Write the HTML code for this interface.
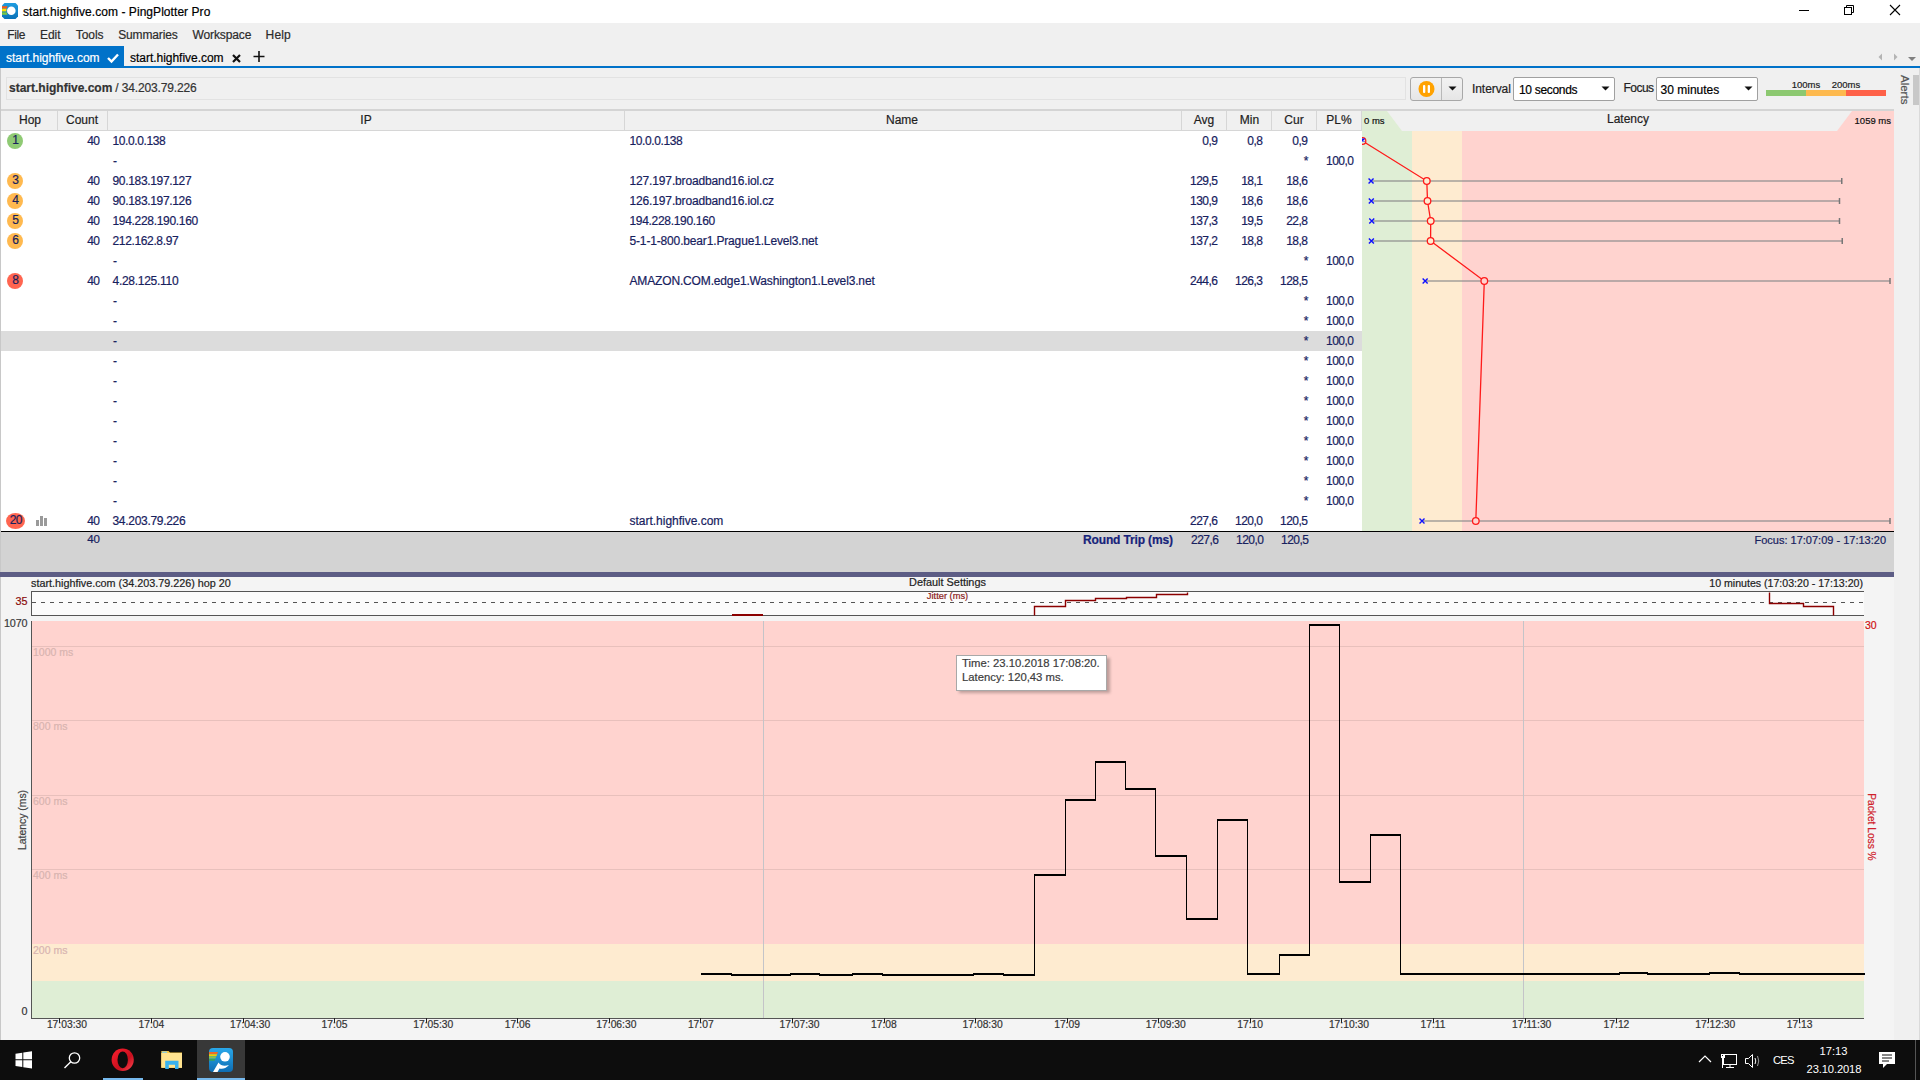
<!DOCTYPE html>
<html><head><meta charset="utf-8"><style>
html,body{margin:0;padding:0;width:1920px;height:1080px;overflow:hidden;background:#f0f0f0;font-family:"Liberation Sans", sans-serif;}
.t{position:absolute;white-space:pre;-webkit-text-stroke:0.2px currentColor;font-family:"Liberation Sans", sans-serif;}
</style></head><body>
<div style="position:absolute;left:0px;top:0px;width:1920px;height:23px;background:#ffffff;"></div>
<svg style="position:absolute;left:2px;top:3px" width="17" height="17" viewBox="0 0 17 17">
<defs><linearGradient id="ig" x1="0" y1="0" x2="0" y2="1"><stop offset="0" stop-color="#1f9de0"/><stop offset="1" stop-color="#0a72b8"/></linearGradient></defs>
<polygon points="2.5,0 13.5,0 16,2.5 16,13.5 13.5,16 2.5,16 0,13.5 0,2.5" fill="url(#ig)"/>
<polygon points="0,3.3 5.5,3.3 4.8,5.6 0,5.6" fill="#ff5a10"/><polygon points="0,5.8 4.5,5.8 4.3,8.6 0,8.6" fill="#ffe000"/>
<polygon points="0,8.8 4.3,8.8 4.6,9.6 0,9.6" fill="#3fa070"/><polygon points="0,9.6 4.6,9.6 5.5,11.8 0,11.8" fill="#7ac943"/>
<circle cx="9.3" cy="7.7" r="4.3" fill="#fff"/></svg>
<div class="t" style="left:23px;top:5.84px;font-size:12px;line-height:12px;color:#000;font-weight:400;letter-spacing:0.055px;">start.highfive.com - PingPlotter Pro</div>
<div style="position:absolute;left:1799px;top:10px;width:10px;height:1px;background:#000;"></div>
<svg style="position:absolute;left:1840px;top:2px" width="20" height="18"><g fill="none" stroke="#000" stroke-width="1">
<rect x="4.5" y="5.5" width="7" height="7"/><path d="M6.5 5.5 V3.5 H13.5 V10.5 H11.5"/></g></svg>
<svg style="position:absolute;left:1886px;top:1px" width="18" height="18"><path d="M4 4 L14 14 M14 4 L4 14" stroke="#000" stroke-width="1.1"/></svg>
<div style="position:absolute;left:0px;top:23px;width:1920px;height:23px;background:#f0f0f0;"></div>
<div class="t" style="left:7.2px;top:28.54px;font-size:12px;line-height:12px;color:#2b2b2b;font-weight:400;letter-spacing:-0.361px;">File</div>
<div class="t" style="left:40.0px;top:28.54px;font-size:12px;line-height:12px;color:#2b2b2b;font-weight:400;letter-spacing:-0.047px;">Edit</div>
<div class="t" style="left:75.7px;top:28.54px;font-size:12px;line-height:12px;color:#2b2b2b;font-weight:400;letter-spacing:-0.043px;">Tools</div>
<div class="t" style="left:118.25px;top:28.54px;font-size:12px;line-height:12px;color:#2b2b2b;font-weight:400;letter-spacing:-0.154px;">Summaries</div>
<div class="t" style="left:192.5px;top:28.54px;font-size:12px;line-height:12px;color:#2b2b2b;font-weight:400;letter-spacing:-0.113px;">Workspace</div>
<div class="t" style="left:265.6px;top:28.54px;font-size:12px;line-height:12px;color:#2b2b2b;font-weight:400;letter-spacing:0.153px;">Help</div>
<div style="position:absolute;left:0px;top:46px;width:1920px;height:20px;background:#f0f0f0;"></div>
<div style="position:absolute;left:0px;top:46px;width:124px;height:20px;background:#0072c9;"></div>
<div style="position:absolute;left:0px;top:66px;width:1920px;height:2px;background:#0072c9;"></div>
<div class="t" style="left:6px;top:51.84px;font-size:12px;line-height:12px;color:#fff;font-weight:400;letter-spacing:-0.030px;">start.highfive.com</div>
<svg style="position:absolute;left:106px;top:52px" width="14" height="12"><path d="M2 6 L5.5 9.5 L12 2.5" fill="none" stroke="#fff" stroke-width="2.4"/></svg>
<div class="t" style="left:130px;top:51.84px;font-size:12px;line-height:12px;color:#000;font-weight:400;letter-spacing:-0.025px;">start.highfive.com</div>
<svg style="position:absolute;left:231px;top:53px" width="11" height="11"><path d="M2 2 L9 9 M9 2 L2 9" stroke="#111" stroke-width="2.2"/></svg>
<svg style="position:absolute;left:253px;top:50px" width="12" height="13"><path d="M6 1 V12 M0.5 6.5 H11.5" stroke="#111" stroke-width="1.6"/></svg>
<svg style="position:absolute;left:1876px;top:52px" width="44" height="11">
<path d="M6 1.5 L2.5 5 L6 8.5 Z" fill="#b4b4b4"/><path d="M18 1.5 L21.5 5 L18 8.5 Z" fill="#b4b4b4"/>
<path d="M32 5 L40 5 L36 9 Z" fill="#808080"/></svg>
<div style="position:absolute;left:0px;top:68px;width:1920px;height:972px;background:#f0f0f0;"></div>
<div style="position:absolute;left:0px;top:68px;width:1px;height:972px;background:#c8c8c8;"></div>
<div style="position:absolute;left:6px;top:77px;width:1400px;height:23px;background:#f0f0f0;box-sizing:border-box;border:1px solid #e2e2e2;"></div>
<div class="t" style="left:9px;top:82.34px;font-size:12px;line-height:12px;color:#333;font-weight:700;letter-spacing:-0.003px;">start.highfive.com</div>
<div class="t" style="left:115.3px;top:82.34px;font-size:12px;line-height:12px;color:#333;font-weight:400;letter-spacing:-0.141px;">/ 34.203.79.226</div>
<div style="position:absolute;left:1410px;top:77px;width:53px;height:24px;box-sizing:border-box;border:1px solid #a8a8a8;border-radius:3px;background:linear-gradient(#f2f2f2,#e6e6e6)"></div>
<div style="position:absolute;left:1441px;top:78px;width:1px;height:22px;background:#b8b8b8;"></div>
<svg style="position:absolute;left:1416px;top:79px" width="21" height="20"><circle cx="10.5" cy="10" r="8" fill="#ffa200"/>
<rect x="7" y="6" width="2.3" height="8" rx="1" fill="#fff"/><rect x="11.7" y="6" width="2.3" height="8" rx="1" fill="#fff"/></svg>
<svg style="position:absolute;left:1448px;top:86px" width="10" height="6"><path d="M0.5 0.5 L8.5 0.5 L4.5 4.5 Z" fill="#111"/></svg>
<div class="t" style="left:1472px;top:82.84px;font-size:12px;line-height:12px;color:#222;font-weight:400;letter-spacing:-0.070px;">Interval</div>
<div style="position:absolute;left:1513px;top:77px;width:102px;height:24px;box-sizing:border-box;border:1px solid #a0a0a0;border-radius:2px;background:#fff"></div>
<div class="t" style="left:1519px;top:83.64px;font-size:12px;line-height:12px;color:#000;font-weight:400;letter-spacing:-0.309px;">10 seconds</div>
<svg style="position:absolute;left:1601px;top:86px" width="10" height="6"><path d="M0.5 0.5 L8.5 0.5 L4.5 4.5 Z" fill="#111"/></svg>
<div class="t" style="left:1623.5px;top:82.44px;font-size:12px;line-height:12px;color:#222;font-weight:400;letter-spacing:-0.537px;">Focus</div>
<div style="position:absolute;left:1656px;top:77px;width:102px;height:24px;box-sizing:border-box;border:1px solid #a0a0a0;border-radius:2px;background:#fff"></div>
<div class="t" style="left:1660.5px;top:83.64px;font-size:12px;line-height:12px;color:#000;font-weight:400;letter-spacing:0.010px;">30 minutes</div>
<svg style="position:absolute;left:1744px;top:86px" width="10" height="6"><path d="M0.5 0.5 L8.5 0.5 L4.5 4.5 Z" fill="#111"/></svg>
<div style="position:absolute;left:1766px;top:90px;width:40px;height:6px;background:#8cc870;"></div>
<div style="position:absolute;left:1806px;top:90px;width:40px;height:6px;background:#fdb94e;"></div>
<div style="position:absolute;left:1846px;top:90px;width:40px;height:6px;background:#fe6148;"></div>
<div class="t" style="left:1306px;width:1000px;text-align:center;top:79.96px;font-size:9.5px;line-height:9.5px;color:#222;font-weight:400;">100ms</div>
<div class="t" style="left:1346px;width:1000px;text-align:center;top:79.96px;font-size:9.5px;line-height:9.5px;color:#222;font-weight:400;">200ms</div>
<div style="position:absolute;left:1894px;top:68px;width:26px;height:972px;background:#f0f0f0;"></div>
<div style="position:absolute;left:1919px;top:68px;width:1px;height:972px;background:#dadada;"></div>
<div style="position:absolute;left:1913px;top:75px;width:6px;height:30px;background:#c8c8c8;"></div>
<div class="t" style="left:1893px;top:80px;width:24px;height:14px;font-size:11.5px;line-height:14px;color:#555;transform:rotate(90deg);transform-origin:center;text-align:center;white-space:nowrap">Alerts</div>
<div style="position:absolute;left:1px;top:109px;width:1893px;height:2px;background:#d4d4d4;"></div>
<div style="position:absolute;left:1px;top:111px;width:1361px;height:19px;background:#f0f0f0;"></div>
<div style="position:absolute;left:1px;top:130px;width:1361px;height:1px;background:#d6d6d6;"></div>
<div style="position:absolute;left:57px;top:111px;width:1px;height:19px;background:#d6d6d6;"></div>
<div style="position:absolute;left:107px;top:111px;width:1px;height:19px;background:#d6d6d6;"></div>
<div style="position:absolute;left:624px;top:111px;width:1px;height:19px;background:#d6d6d6;"></div>
<div style="position:absolute;left:1181px;top:111px;width:1px;height:19px;background:#d6d6d6;"></div>
<div style="position:absolute;left:1226px;top:111px;width:1px;height:19px;background:#d6d6d6;"></div>
<div style="position:absolute;left:1271px;top:111px;width:1px;height:19px;background:#d6d6d6;"></div>
<div style="position:absolute;left:1316px;top:111px;width:1px;height:19px;background:#d6d6d6;"></div>
<div style="position:absolute;left:1361px;top:111px;width:1px;height:19px;background:#d6d6d6;"></div>
<div class="t" style="left:-470px;width:1000px;text-align:center;top:113.84px;font-size:12px;line-height:12px;color:#1e1e1e;font-weight:400;">Hop</div>
<div class="t" style="left:-418px;width:1000px;text-align:center;top:113.84px;font-size:12px;line-height:12px;color:#1e1e1e;font-weight:400;">Count</div>
<div class="t" style="left:-134px;width:1000px;text-align:center;top:113.84px;font-size:12px;line-height:12px;color:#1e1e1e;font-weight:400;">IP</div>
<div class="t" style="left:402px;width:1000px;text-align:center;top:113.84px;font-size:12px;line-height:12px;color:#1e1e1e;font-weight:400;">Name</div>
<div class="t" style="left:704px;width:1000px;text-align:center;top:113.84px;font-size:12px;line-height:12px;color:#1e1e1e;font-weight:400;">Avg</div>
<div class="t" style="left:749.5px;width:1000px;text-align:center;top:113.84px;font-size:12px;line-height:12px;color:#1e1e1e;font-weight:400;">Min</div>
<div class="t" style="left:794px;width:1000px;text-align:center;top:113.84px;font-size:12px;line-height:12px;color:#1e1e1e;font-weight:400;">Cur</div>
<div class="t" style="left:839px;width:1000px;text-align:center;top:113.84px;font-size:12px;line-height:12px;color:#1e1e1e;font-weight:400;">PL%</div>
<div style="position:absolute;left:1px;top:131px;width:1361px;height:400px;background:#ffffff;"></div>
<div style="position:absolute;left:1px;top:331px;width:1361px;height:20px;background:#dcdcdc;"></div>
<div style="position:absolute;left:7.0px;top:133px;width:16px;height:16px;border-radius:50%;background:#8fca74"></div>
<div class="t" style="left:-484.5px;width:1000px;text-align:center;top:133.84px;font-size:12px;line-height:12px;color:#17215e;font-weight:400;">1</div>
<div class="t" style="left:-900.500px;width:1000px;text-align:right;top:134.84px;font-size:12px;line-height:12px;color:#17215e;font-weight:400;letter-spacing:-0.500px;">40</div>
<div class="t" style="left:112.5px;top:134.84px;font-size:12px;line-height:12px;color:#17215e;font-weight:400;letter-spacing:-0.402px;">10.0.0.138</div>
<div class="t" style="left:629.5px;top:134.84px;font-size:12px;line-height:12px;color:#17215e;font-weight:400;letter-spacing:-0.402px;">10.0.0.138</div>
<div class="t" style="left:217.500px;width:1000px;text-align:right;top:134.84px;font-size:12px;line-height:12px;color:#17215e;font-weight:400;letter-spacing:-0.500px;">0,9</div>
<div class="t" style="left:262.500px;width:1000px;text-align:right;top:134.84px;font-size:12px;line-height:12px;color:#17215e;font-weight:400;letter-spacing:-0.500px;">0,8</div>
<div class="t" style="left:307.500px;width:1000px;text-align:right;top:134.84px;font-size:12px;line-height:12px;color:#17215e;font-weight:400;letter-spacing:-0.500px;">0,9</div>
<div class="t" style="left:113px;top:154.54px;font-size:12px;line-height:12px;color:#17215e;font-weight:400;">-</div>
<div class="t" style="left:308.5px;width:1000px;text-align:right;top:154.84px;font-size:12px;line-height:12px;color:#17215e;font-weight:400;">*</div>
<div class="t" style="left:353.500px;width:1000px;text-align:right;top:154.84px;font-size:12px;line-height:12px;color:#17215e;font-weight:400;letter-spacing:-0.500px;">100,0</div>
<div style="position:absolute;left:7.0px;top:173px;width:16px;height:16px;border-radius:50%;background:#ffb94f"></div>
<div class="t" style="left:-484.5px;width:1000px;text-align:center;top:173.84px;font-size:12px;line-height:12px;color:#17215e;font-weight:400;">3</div>
<div class="t" style="left:-900.500px;width:1000px;text-align:right;top:174.84px;font-size:12px;line-height:12px;color:#17215e;font-weight:400;letter-spacing:-0.500px;">40</div>
<div class="t" style="left:112.5px;top:174.84px;font-size:12px;line-height:12px;color:#17215e;font-weight:400;letter-spacing:-0.330px;">90.183.197.127</div>
<div class="t" style="left:629.5px;top:174.84px;font-size:12px;line-height:12px;color:#17215e;font-weight:400;letter-spacing:-0.143px;">127.197.broadband16.iol.cz</div>
<div class="t" style="left:217.500px;width:1000px;text-align:right;top:174.84px;font-size:12px;line-height:12px;color:#17215e;font-weight:400;letter-spacing:-0.500px;">129,5</div>
<div class="t" style="left:262.500px;width:1000px;text-align:right;top:174.84px;font-size:12px;line-height:12px;color:#17215e;font-weight:400;letter-spacing:-0.500px;">18,1</div>
<div class="t" style="left:307.500px;width:1000px;text-align:right;top:174.84px;font-size:12px;line-height:12px;color:#17215e;font-weight:400;letter-spacing:-0.500px;">18,6</div>
<div style="position:absolute;left:7.0px;top:193px;width:16px;height:16px;border-radius:50%;background:#ffb94f"></div>
<div class="t" style="left:-484.5px;width:1000px;text-align:center;top:193.84px;font-size:12px;line-height:12px;color:#17215e;font-weight:400;">4</div>
<div class="t" style="left:-900.500px;width:1000px;text-align:right;top:194.84px;font-size:12px;line-height:12px;color:#17215e;font-weight:400;letter-spacing:-0.500px;">40</div>
<div class="t" style="left:112.5px;top:194.84px;font-size:12px;line-height:12px;color:#17215e;font-weight:400;letter-spacing:-0.330px;">90.183.197.126</div>
<div class="t" style="left:629.5px;top:194.84px;font-size:12px;line-height:12px;color:#17215e;font-weight:400;letter-spacing:-0.143px;">126.197.broadband16.iol.cz</div>
<div class="t" style="left:217.500px;width:1000px;text-align:right;top:194.84px;font-size:12px;line-height:12px;color:#17215e;font-weight:400;letter-spacing:-0.500px;">130,9</div>
<div class="t" style="left:262.500px;width:1000px;text-align:right;top:194.84px;font-size:12px;line-height:12px;color:#17215e;font-weight:400;letter-spacing:-0.500px;">18,6</div>
<div class="t" style="left:307.500px;width:1000px;text-align:right;top:194.84px;font-size:12px;line-height:12px;color:#17215e;font-weight:400;letter-spacing:-0.500px;">18,6</div>
<div style="position:absolute;left:7.0px;top:213px;width:16px;height:16px;border-radius:50%;background:#ffb94f"></div>
<div class="t" style="left:-484.5px;width:1000px;text-align:center;top:213.84px;font-size:12px;line-height:12px;color:#17215e;font-weight:400;">5</div>
<div class="t" style="left:-900.500px;width:1000px;text-align:right;top:214.84px;font-size:12px;line-height:12px;color:#17215e;font-weight:400;letter-spacing:-0.500px;">40</div>
<div class="t" style="left:112.5px;top:214.84px;font-size:12px;line-height:12px;color:#17215e;font-weight:400;letter-spacing:-0.313px;">194.228.190.160</div>
<div class="t" style="left:629.5px;top:214.84px;font-size:12px;line-height:12px;color:#17215e;font-weight:400;letter-spacing:-0.313px;">194.228.190.160</div>
<div class="t" style="left:217.500px;width:1000px;text-align:right;top:214.84px;font-size:12px;line-height:12px;color:#17215e;font-weight:400;letter-spacing:-0.500px;">137,3</div>
<div class="t" style="left:262.500px;width:1000px;text-align:right;top:214.84px;font-size:12px;line-height:12px;color:#17215e;font-weight:400;letter-spacing:-0.500px;">19,5</div>
<div class="t" style="left:307.500px;width:1000px;text-align:right;top:214.84px;font-size:12px;line-height:12px;color:#17215e;font-weight:400;letter-spacing:-0.500px;">22,8</div>
<div style="position:absolute;left:7.0px;top:233px;width:16px;height:16px;border-radius:50%;background:#ffb94f"></div>
<div class="t" style="left:-484.5px;width:1000px;text-align:center;top:233.84px;font-size:12px;line-height:12px;color:#17215e;font-weight:400;">6</div>
<div class="t" style="left:-900.500px;width:1000px;text-align:right;top:234.84px;font-size:12px;line-height:12px;color:#17215e;font-weight:400;letter-spacing:-0.500px;">40</div>
<div class="t" style="left:112.5px;top:234.84px;font-size:12px;line-height:12px;color:#17215e;font-weight:400;letter-spacing:-0.357px;">212.162.8.97</div>
<div class="t" style="left:629.5px;top:234.84px;font-size:12px;line-height:12px;color:#17215e;font-weight:400;letter-spacing:-0.155px;">5-1-1-800.bear1.Prague1.Level3.net</div>
<div class="t" style="left:217.500px;width:1000px;text-align:right;top:234.84px;font-size:12px;line-height:12px;color:#17215e;font-weight:400;letter-spacing:-0.500px;">137,2</div>
<div class="t" style="left:262.500px;width:1000px;text-align:right;top:234.84px;font-size:12px;line-height:12px;color:#17215e;font-weight:400;letter-spacing:-0.500px;">18,8</div>
<div class="t" style="left:307.500px;width:1000px;text-align:right;top:234.84px;font-size:12px;line-height:12px;color:#17215e;font-weight:400;letter-spacing:-0.500px;">18,8</div>
<div class="t" style="left:113px;top:254.54px;font-size:12px;line-height:12px;color:#17215e;font-weight:400;">-</div>
<div class="t" style="left:308.5px;width:1000px;text-align:right;top:254.84px;font-size:12px;line-height:12px;color:#17215e;font-weight:400;">*</div>
<div class="t" style="left:353.500px;width:1000px;text-align:right;top:254.84px;font-size:12px;line-height:12px;color:#17215e;font-weight:400;letter-spacing:-0.500px;">100,0</div>
<div style="position:absolute;left:7.0px;top:273px;width:16px;height:16px;border-radius:50%;background:#ff6550"></div>
<div class="t" style="left:-484.5px;width:1000px;text-align:center;top:273.84px;font-size:12px;line-height:12px;color:#17215e;font-weight:400;">8</div>
<div class="t" style="left:-900.500px;width:1000px;text-align:right;top:274.84px;font-size:12px;line-height:12px;color:#17215e;font-weight:400;letter-spacing:-0.500px;">40</div>
<div class="t" style="left:112.5px;top:274.84px;font-size:12px;line-height:12px;color:#17215e;font-weight:400;letter-spacing:-0.282px;">4.28.125.110</div>
<div class="t" style="left:629.5px;top:274.84px;font-size:12px;line-height:12px;color:#17215e;font-weight:400;letter-spacing:-0.152px;">AMAZON.COM.edge1.Washington1.Level3.net</div>
<div class="t" style="left:217.500px;width:1000px;text-align:right;top:274.84px;font-size:12px;line-height:12px;color:#17215e;font-weight:400;letter-spacing:-0.500px;">244,6</div>
<div class="t" style="left:262.500px;width:1000px;text-align:right;top:274.84px;font-size:12px;line-height:12px;color:#17215e;font-weight:400;letter-spacing:-0.500px;">126,3</div>
<div class="t" style="left:307.500px;width:1000px;text-align:right;top:274.84px;font-size:12px;line-height:12px;color:#17215e;font-weight:400;letter-spacing:-0.500px;">128,5</div>
<div class="t" style="left:113px;top:294.54px;font-size:12px;line-height:12px;color:#17215e;font-weight:400;">-</div>
<div class="t" style="left:308.5px;width:1000px;text-align:right;top:294.84px;font-size:12px;line-height:12px;color:#17215e;font-weight:400;">*</div>
<div class="t" style="left:353.500px;width:1000px;text-align:right;top:294.84px;font-size:12px;line-height:12px;color:#17215e;font-weight:400;letter-spacing:-0.500px;">100,0</div>
<div class="t" style="left:113px;top:314.54px;font-size:12px;line-height:12px;color:#17215e;font-weight:400;">-</div>
<div class="t" style="left:308.5px;width:1000px;text-align:right;top:314.84px;font-size:12px;line-height:12px;color:#17215e;font-weight:400;">*</div>
<div class="t" style="left:353.500px;width:1000px;text-align:right;top:314.84px;font-size:12px;line-height:12px;color:#17215e;font-weight:400;letter-spacing:-0.500px;">100,0</div>
<div class="t" style="left:113px;top:334.54px;font-size:12px;line-height:12px;color:#17215e;font-weight:400;">-</div>
<div class="t" style="left:308.5px;width:1000px;text-align:right;top:334.84px;font-size:12px;line-height:12px;color:#17215e;font-weight:400;">*</div>
<div class="t" style="left:353.500px;width:1000px;text-align:right;top:334.84px;font-size:12px;line-height:12px;color:#17215e;font-weight:400;letter-spacing:-0.500px;">100,0</div>
<div class="t" style="left:113px;top:354.54px;font-size:12px;line-height:12px;color:#17215e;font-weight:400;">-</div>
<div class="t" style="left:308.5px;width:1000px;text-align:right;top:354.84px;font-size:12px;line-height:12px;color:#17215e;font-weight:400;">*</div>
<div class="t" style="left:353.500px;width:1000px;text-align:right;top:354.84px;font-size:12px;line-height:12px;color:#17215e;font-weight:400;letter-spacing:-0.500px;">100,0</div>
<div class="t" style="left:113px;top:374.54px;font-size:12px;line-height:12px;color:#17215e;font-weight:400;">-</div>
<div class="t" style="left:308.5px;width:1000px;text-align:right;top:374.84px;font-size:12px;line-height:12px;color:#17215e;font-weight:400;">*</div>
<div class="t" style="left:353.500px;width:1000px;text-align:right;top:374.84px;font-size:12px;line-height:12px;color:#17215e;font-weight:400;letter-spacing:-0.500px;">100,0</div>
<div class="t" style="left:113px;top:394.54px;font-size:12px;line-height:12px;color:#17215e;font-weight:400;">-</div>
<div class="t" style="left:308.5px;width:1000px;text-align:right;top:394.84px;font-size:12px;line-height:12px;color:#17215e;font-weight:400;">*</div>
<div class="t" style="left:353.500px;width:1000px;text-align:right;top:394.84px;font-size:12px;line-height:12px;color:#17215e;font-weight:400;letter-spacing:-0.500px;">100,0</div>
<div class="t" style="left:113px;top:414.54px;font-size:12px;line-height:12px;color:#17215e;font-weight:400;">-</div>
<div class="t" style="left:308.5px;width:1000px;text-align:right;top:414.84px;font-size:12px;line-height:12px;color:#17215e;font-weight:400;">*</div>
<div class="t" style="left:353.500px;width:1000px;text-align:right;top:414.84px;font-size:12px;line-height:12px;color:#17215e;font-weight:400;letter-spacing:-0.500px;">100,0</div>
<div class="t" style="left:113px;top:434.54px;font-size:12px;line-height:12px;color:#17215e;font-weight:400;">-</div>
<div class="t" style="left:308.5px;width:1000px;text-align:right;top:434.84px;font-size:12px;line-height:12px;color:#17215e;font-weight:400;">*</div>
<div class="t" style="left:353.500px;width:1000px;text-align:right;top:434.84px;font-size:12px;line-height:12px;color:#17215e;font-weight:400;letter-spacing:-0.500px;">100,0</div>
<div class="t" style="left:113px;top:454.54px;font-size:12px;line-height:12px;color:#17215e;font-weight:400;">-</div>
<div class="t" style="left:308.5px;width:1000px;text-align:right;top:454.84px;font-size:12px;line-height:12px;color:#17215e;font-weight:400;">*</div>
<div class="t" style="left:353.500px;width:1000px;text-align:right;top:454.84px;font-size:12px;line-height:12px;color:#17215e;font-weight:400;letter-spacing:-0.500px;">100,0</div>
<div class="t" style="left:113px;top:474.54px;font-size:12px;line-height:12px;color:#17215e;font-weight:400;">-</div>
<div class="t" style="left:308.5px;width:1000px;text-align:right;top:474.84px;font-size:12px;line-height:12px;color:#17215e;font-weight:400;">*</div>
<div class="t" style="left:353.500px;width:1000px;text-align:right;top:474.84px;font-size:12px;line-height:12px;color:#17215e;font-weight:400;letter-spacing:-0.500px;">100,0</div>
<div class="t" style="left:113px;top:494.54px;font-size:12px;line-height:12px;color:#17215e;font-weight:400;">-</div>
<div class="t" style="left:308.5px;width:1000px;text-align:right;top:494.84px;font-size:12px;line-height:12px;color:#17215e;font-weight:400;">*</div>
<div class="t" style="left:353.500px;width:1000px;text-align:right;top:494.84px;font-size:12px;line-height:12px;color:#17215e;font-weight:400;letter-spacing:-0.500px;">100,0</div>
<div style="position:absolute;left:6.4px;top:513px;width:19px;height:16px;border-radius:50%;background:#ff6550"></div>
<div class="t" style="left:-484.300px;width:1000px;text-align:center;top:513.84px;font-size:12px;line-height:12px;color:#17215e;font-weight:400;letter-spacing:-0.600px;">20</div>
<div class="t" style="left:-900.500px;width:1000px;text-align:right;top:514.84px;font-size:12px;line-height:12px;color:#17215e;font-weight:400;letter-spacing:-0.500px;">40</div>
<div class="t" style="left:112.5px;top:514.84px;font-size:12px;line-height:12px;color:#17215e;font-weight:400;letter-spacing:-0.304px;">34.203.79.226</div>
<div class="t" style="left:629.5px;top:514.84px;font-size:12px;line-height:12px;color:#17215e;font-weight:400;letter-spacing:-0.014px;">start.highfive.com</div>
<div class="t" style="left:217.500px;width:1000px;text-align:right;top:514.84px;font-size:12px;line-height:12px;color:#17215e;font-weight:400;letter-spacing:-0.500px;">227,6</div>
<div class="t" style="left:262.500px;width:1000px;text-align:right;top:514.84px;font-size:12px;line-height:12px;color:#17215e;font-weight:400;letter-spacing:-0.500px;">120,0</div>
<div class="t" style="left:307.500px;width:1000px;text-align:right;top:514.84px;font-size:12px;line-height:12px;color:#17215e;font-weight:400;letter-spacing:-0.500px;">120,5</div>
<div style="position:absolute;left:36px;top:520px;width:3px;height:6px;background:#9a9a9a;"></div>
<div style="position:absolute;left:40px;top:516px;width:3px;height:10px;background:#9a9a9a;"></div>
<div style="position:absolute;left:44px;top:518px;width:3px;height:8px;background:#9a9a9a;"></div>
<svg style="position:absolute;left:0;top:0" width="1920" height="1080"><defs><clipPath id="gc"><rect x="1362" y="111" width="532" height="420"/></clipPath></defs><g clip-path="url(#gc)">
<rect x="1362" y="131" width="50" height="400" fill="#dfeed5"/>
<rect x="1412" y="131" width="50" height="400" fill="#feebd0"/>
<rect x="1462" y="131" width="432" height="400" fill="#ffd3cf"/>
<polygon points="1362,111 1387,111 1402,131 1362,131" fill="#dfeed5"/>
<polygon points="1852,111 1894,111 1894,131 1837,131" fill="#ffd3cf"/>
<line x1="1371.05" y1="181" x2="1841.75" y2="181" stroke="#8c8c8c" stroke-opacity="0.6" stroke-width="2"/>
<line x1="1841.75" y1="178" x2="1841.75" y2="184" stroke="#777" stroke-width="1.5"/>
<line x1="1371.3" y1="201" x2="1839.5" y2="201" stroke="#8c8c8c" stroke-opacity="0.6" stroke-width="2"/>
<line x1="1839.5" y1="198" x2="1839.5" y2="204" stroke="#777" stroke-width="1.5"/>
<line x1="1371.75" y1="221" x2="1839.5" y2="221" stroke="#8c8c8c" stroke-opacity="0.6" stroke-width="2"/>
<line x1="1839.5" y1="218" x2="1839.5" y2="224" stroke="#777" stroke-width="1.5"/>
<line x1="1371.4" y1="241" x2="1842.25" y2="241" stroke="#8c8c8c" stroke-opacity="0.6" stroke-width="2"/>
<line x1="1842.25" y1="238" x2="1842.25" y2="244" stroke="#777" stroke-width="1.5"/>
<line x1="1425.15" y1="281" x2="1890.0" y2="281" stroke="#8c8c8c" stroke-opacity="0.6" stroke-width="2"/>
<line x1="1890.0" y1="278" x2="1890.0" y2="284" stroke="#777" stroke-width="1.5"/>
<line x1="1422.0" y1="521" x2="1890.0" y2="521" stroke="#8c8c8c" stroke-opacity="0.6" stroke-width="2"/>
<line x1="1890.0" y1="518" x2="1890.0" y2="524" stroke="#777" stroke-width="1.5"/>
<polyline points="1362.5,141 1426.8,181 1427.5,201 1430.7,221 1430.6,241 1484.3,281 1475.8,521" fill="none" stroke="#ff1a1a" stroke-width="1.3"/>
<circle cx="1362.5" cy="141" r="3.3" fill="#dfeed5" stroke="#ff1a1a" stroke-width="1.3"/>
<circle cx="1426.8" cy="181" r="3.3" fill="#feebd0" stroke="#ff1a1a" stroke-width="1.3"/>
<circle cx="1427.5" cy="201" r="3.3" fill="#feebd0" stroke="#ff1a1a" stroke-width="1.3"/>
<circle cx="1430.7" cy="221" r="3.3" fill="#feebd0" stroke="#ff1a1a" stroke-width="1.3"/>
<circle cx="1430.6" cy="241" r="3.3" fill="#feebd0" stroke="#ff1a1a" stroke-width="1.3"/>
<circle cx="1484.3" cy="281" r="3.3" fill="#ffd3cf" stroke="#ff1a1a" stroke-width="1.3"/>
<circle cx="1475.8" cy="521" r="3.3" fill="#ffd3cf" stroke="#ff1a1a" stroke-width="1.3"/>
<path d="M1368.55 178.5 L1373.55 183.5 M1373.55 178.5 L1368.55 183.5" stroke="#1010ff" stroke-width="1.4"/>
<path d="M1368.8 198.5 L1373.8 203.5 M1373.8 198.5 L1368.8 203.5" stroke="#1010ff" stroke-width="1.4"/>
<path d="M1369.25 218.5 L1374.25 223.5 M1374.25 218.5 L1369.25 223.5" stroke="#1010ff" stroke-width="1.4"/>
<path d="M1368.9 238.5 L1373.9 243.5 M1373.9 238.5 L1368.9 243.5" stroke="#1010ff" stroke-width="1.4"/>
<path d="M1422.65 278.5 L1427.65 283.5 M1427.65 278.5 L1422.65 283.5" stroke="#1010ff" stroke-width="1.4"/>
<path d="M1419.5 518.5 L1424.5 523.5 M1424.5 518.5 L1419.5 523.5" stroke="#1010ff" stroke-width="1.4"/>
<path d="M1361.5 138.5 L1364.5 141.5 M1364.5 138.5 L1361.5 141.5" stroke="#1010ff" stroke-width="1.4"/>
</g></svg>
<div class="t" style="left:1364px;top:115.96px;font-size:9.5px;line-height:9.5px;color:#111;font-weight:400;">0 ms</div>
<div class="t" style="left:1128px;width:1000px;text-align:center;top:112.84px;font-size:12px;line-height:12px;color:#1e1e1e;font-weight:400;">Latency</div>
<div class="t" style="left:891px;width:1000px;text-align:right;top:115.96px;font-size:9.5px;line-height:9.5px;color:#111;font-weight:400;">1059 ms</div>
<div style="position:absolute;left:1px;top:531px;width:1893px;height:1px;background:#000;"></div>
<div style="position:absolute;left:1px;top:532px;width:1893px;height:40px;background:#d3d3d3;"></div>
<div class="t" style="left:-900px;width:1000px;text-align:right;top:534.27px;font-size:11.5px;line-height:11.5px;color:#17215e;font-weight:400;">40</div>
<div class="t" style="left:172.853px;width:1000px;text-align:right;top:534.34px;font-size:12px;line-height:12px;color:#16237a;font-weight:700;letter-spacing:-0.147px;">Round Trip (ms)</div>
<div class="t" style="left:218.500px;width:1000px;text-align:right;top:534.34px;font-size:12px;line-height:12px;color:#17215e;font-weight:400;letter-spacing:-0.500px;">227,6</div>
<div class="t" style="left:263.500px;width:1000px;text-align:right;top:534.34px;font-size:12px;line-height:12px;color:#17215e;font-weight:400;letter-spacing:-0.500px;">120,0</div>
<div class="t" style="left:308.500px;width:1000px;text-align:right;top:534.34px;font-size:12px;line-height:12px;color:#17215e;font-weight:400;letter-spacing:-0.500px;">120,5</div>
<div class="t" style="left:886px;width:1000px;text-align:right;top:534.69px;font-size:11px;line-height:11px;color:#17215e;font-weight:400;">Focus: 17:07:09 - 17:13:20</div>
<div style="position:absolute;left:0px;top:572px;width:1894px;height:5px;background:#5d5d85;"></div>
<div style="position:absolute;left:1px;top:577px;width:1893px;height:463px;background:#f4f4f4;"></div>
<div class="t" style="left:31px;top:577.86px;font-size:10.8px;line-height:10.8px;color:#222;font-weight:400;">start.highfive.com (34.203.79.226) hop 20</div>
<div class="t" style="left:447.5px;width:1000px;text-align:center;top:577.27px;font-size:10.9px;line-height:10.9px;color:#222;font-weight:400;">Default Settings</div>
<div class="t" style="left:863px;width:1000px;text-align:right;top:578.03px;font-size:10.6px;line-height:10.6px;color:#222;font-weight:400;">10 minutes (17:03:20 - 17:13:20)</div>
<svg style="position:absolute;left:0;top:0" width="1920" height="1080" shape-rendering="crispEdges">
<rect x="31" y="591" width="1833" height="25" fill="#fbfbfb"/>
<rect x="31" y="591" width="1833" height="1" fill="#555"/>
<rect x="31" y="615" width="1833" height="1" fill="#555"/>
<rect x="31" y="591" width="1" height="25" fill="#555"/>
<line x1="32" y1="602.5" x2="1863" y2="602.5" stroke="#555" stroke-width="1.6" stroke-dasharray="4 5"/>
<rect x="32" y="621" width="1832" height="323" fill="#ffd3cf"/>
<rect x="32" y="944" width="1832" height="37" fill="#feebd0"/>
<rect x="32" y="981" width="1832" height="37" fill="#dfeed5"/>
<rect x="32" y="646" width="1832" height="1" fill="#000" fill-opacity="0.09"/>
<rect x="32" y="720" width="1832" height="1" fill="#000" fill-opacity="0.09"/>
<rect x="32" y="795" width="1832" height="1" fill="#000" fill-opacity="0.09"/>
<rect x="32" y="869" width="1832" height="1" fill="#000" fill-opacity="0.09"/>
<rect x="763" y="621" width="1" height="397" fill="#c4c4c8"/>
<rect x="1523" y="621" width="1" height="397" fill="#c4c4c8"/>
<rect x="31" y="621" width="1" height="398" fill="#555"/>
<rect x="31" y="1018" width="1833" height="1" fill="#555"/>
<rect x="59" y="1018" width="1" height="5" fill="#222"/>
<rect x="151" y="1018" width="1" height="5" fill="#222"/>
<rect x="243" y="1018" width="1" height="5" fill="#222"/>
<rect x="334" y="1018" width="1" height="5" fill="#222"/>
<rect x="426" y="1018" width="1" height="5" fill="#222"/>
<rect x="517" y="1018" width="1" height="5" fill="#222"/>
<rect x="609" y="1018" width="1" height="5" fill="#222"/>
<rect x="700" y="1018" width="1" height="5" fill="#222"/>
<rect x="792" y="1018" width="1" height="5" fill="#222"/>
<rect x="884" y="1018" width="1" height="5" fill="#222"/>
<rect x="975" y="1018" width="1" height="5" fill="#222"/>
<rect x="1067" y="1018" width="1" height="5" fill="#222"/>
<rect x="1158" y="1018" width="1" height="5" fill="#222"/>
<rect x="1250" y="1018" width="1" height="5" fill="#222"/>
<rect x="1341" y="1018" width="1" height="5" fill="#222"/>
<rect x="1433" y="1018" width="1" height="5" fill="#222"/>
<rect x="1525" y="1018" width="1" height="5" fill="#222"/>
<rect x="1616" y="1018" width="1" height="5" fill="#222"/>
<rect x="1708" y="1018" width="1" height="5" fill="#222"/>
<rect x="1799" y="1018" width="1" height="5" fill="#222"/>
<rect x="701" y="973" width="31" height="2" fill="#000"/>
<rect x="731" y="974" width="60" height="2" fill="#000"/>
<rect x="790" y="973" width="30" height="2" fill="#000"/>
<rect x="819" y="974" width="34" height="2" fill="#000"/>
<rect x="852" y="973" width="31" height="2" fill="#000"/>
<rect x="882" y="974" width="92" height="2" fill="#000"/>
<rect x="973" y="973" width="31" height="2" fill="#000"/>
<rect x="1003" y="974" width="32" height="2" fill="#000"/>
<rect x="1034" y="874" width="32" height="2" fill="#000"/>
<rect x="1065" y="799" width="31" height="2" fill="#000"/>
<rect x="1095" y="761" width="31" height="2" fill="#000"/>
<rect x="1125" y="788" width="31" height="2" fill="#000"/>
<rect x="1155" y="855" width="32" height="2" fill="#000"/>
<rect x="1186" y="918" width="32" height="2" fill="#000"/>
<rect x="1217" y="819" width="31" height="2" fill="#000"/>
<rect x="1247" y="973" width="33" height="2" fill="#000"/>
<rect x="1279" y="954" width="31" height="2" fill="#000"/>
<rect x="1309" y="624" width="31" height="2" fill="#000"/>
<rect x="1339" y="881" width="32" height="2" fill="#000"/>
<rect x="1370" y="834" width="31" height="2" fill="#000"/>
<rect x="1400" y="973" width="220" height="2" fill="#000"/>
<rect x="1619" y="972" width="29" height="2" fill="#000"/>
<rect x="1647" y="973" width="63" height="2" fill="#000"/>
<rect x="1709" y="972" width="31" height="2" fill="#000"/>
<rect x="1739" y="973" width="126" height="2" fill="#000"/>
<rect x="1034" y="874" width="1" height="102" fill="#000"/>
<rect x="1065" y="799" width="1" height="77" fill="#000"/>
<rect x="1095" y="761" width="1" height="40" fill="#000"/>
<rect x="1125" y="761" width="1" height="29" fill="#000"/>
<rect x="1155" y="788" width="1" height="69" fill="#000"/>
<rect x="1186" y="855" width="1" height="65" fill="#000"/>
<rect x="1217" y="819" width="1" height="101" fill="#000"/>
<rect x="1247" y="819" width="1" height="156" fill="#000"/>
<rect x="1279" y="954" width="1" height="21" fill="#000"/>
<rect x="1309" y="624" width="1" height="332" fill="#000"/>
<rect x="1339" y="624" width="1" height="259" fill="#000"/>
<rect x="1370" y="834" width="1" height="49" fill="#000"/>
<rect x="1400" y="834" width="1" height="141" fill="#000"/>
<rect x="732" y="614" width="31" height="2" fill="#8b0000"/>
<path d="M1034.5 615.5 L1034.5 606.5 L1065.5 606.5 L1065.5 600.5 L1095.5 600.5 L1095.5 598.5 L1126.5 598.5 L1126.5 597.5 L1156.5 597.5 L1156.5 594.5 L1187.5 594.5 L1187.5 592.5" fill="none" stroke="#8b0000" stroke-width="1.4" shape-rendering="auto"/>
<path d="M1769.5 592.5 L1769.5 603.5 L1803.5 603.5 L1803.5 606.5 L1833.5 606.5 L1833.5 615.5" fill="none" stroke="#8b0000" stroke-width="1.4" shape-rendering="auto"/>
</svg>
<div class="t" style="left:447.5px;width:1000px;text-align:center;top:591.63px;font-size:9.3px;line-height:9.3px;color:#8b1a1a;font-weight:400;">Jitter (ms)</div>
<div class="t" style="left:-972.608px;width:1000px;text-align:right;top:595.86px;font-size:10.8px;line-height:10.8px;color:#8a0a0a;font-weight:400;letter-spacing:-0.108px;">35</div>
<div class="t" style="left:-972.683px;width:1000px;text-align:right;top:617.86px;font-size:10.8px;line-height:10.8px;color:#3a3a3a;font-weight:400;letter-spacing:-0.183px;">1070</div>
<div class="t" style="left:-972.5px;width:1000px;text-align:right;top:1006.36px;font-size:10.8px;line-height:10.8px;color:#333;font-weight:400;">0</div>
<div class="t" style="left:1865px;top:620.11px;font-size:10.5px;line-height:10.5px;color:#d01010;font-weight:400;">30</div>
<div class="t" style="left:33px;top:646.61px;font-size:10.5px;line-height:10.5px;color:#d8b4b0;font-weight:400;">1000 ms</div>
<div class="t" style="left:33px;top:720.61px;font-size:10.5px;line-height:10.5px;color:#d8b4b0;font-weight:400;">800 ms</div>
<div class="t" style="left:33px;top:795.61px;font-size:10.5px;line-height:10.5px;color:#d8b4b0;font-weight:400;">600 ms</div>
<div class="t" style="left:33px;top:869.61px;font-size:10.5px;line-height:10.5px;color:#d8b4b0;font-weight:400;">400 ms</div>
<div class="t" style="left:33px;top:944.61px;font-size:10.5px;line-height:10.5px;color:#d8b4b0;font-weight:400;">200 ms</div>
<div class="t" style="left:46.9px;top:1019.78px;font-size:10.3px;line-height:10.3px;color:#333;font-weight:400;">17:03:30</div>
<div class="t" style="left:138.47px;top:1019.78px;font-size:10.3px;line-height:10.3px;color:#333;font-weight:400;">17:04</div>
<div class="t" style="left:230.04px;top:1019.78px;font-size:10.3px;line-height:10.3px;color:#333;font-weight:400;">17:04:30</div>
<div class="t" style="left:321.60999999999996px;top:1019.78px;font-size:10.3px;line-height:10.3px;color:#333;font-weight:400;">17:05</div>
<div class="t" style="left:413.17999999999995px;top:1019.78px;font-size:10.3px;line-height:10.3px;color:#333;font-weight:400;">17:05:30</div>
<div class="t" style="left:504.75px;top:1019.78px;font-size:10.3px;line-height:10.3px;color:#333;font-weight:400;">17:06</div>
<div class="t" style="left:596.3199999999999px;top:1019.78px;font-size:10.3px;line-height:10.3px;color:#333;font-weight:400;">17:06:30</div>
<div class="t" style="left:687.89px;top:1019.78px;font-size:10.3px;line-height:10.3px;color:#333;font-weight:400;">17:07</div>
<div class="t" style="left:779.4599999999999px;top:1019.78px;font-size:10.3px;line-height:10.3px;color:#333;font-weight:400;">17:07:30</div>
<div class="t" style="left:871.0299999999999px;top:1019.78px;font-size:10.3px;line-height:10.3px;color:#333;font-weight:400;">17:08</div>
<div class="t" style="left:962.5999999999999px;top:1019.78px;font-size:10.3px;line-height:10.3px;color:#333;font-weight:400;">17:08:30</div>
<div class="t" style="left:1054.17px;top:1019.78px;font-size:10.3px;line-height:10.3px;color:#333;font-weight:400;">17:09</div>
<div class="t" style="left:1145.74px;top:1019.78px;font-size:10.3px;line-height:10.3px;color:#333;font-weight:400;">17:09:30</div>
<div class="t" style="left:1237.31px;top:1019.78px;font-size:10.3px;line-height:10.3px;color:#333;font-weight:400;">17:10</div>
<div class="t" style="left:1328.88px;top:1019.78px;font-size:10.3px;line-height:10.3px;color:#333;font-weight:400;">17:10:30</div>
<div class="t" style="left:1420.45px;top:1019.78px;font-size:10.3px;line-height:10.3px;color:#333;font-weight:400;">17:11</div>
<div class="t" style="left:1512.02px;top:1019.78px;font-size:10.3px;line-height:10.3px;color:#333;font-weight:400;">17:11:30</div>
<div class="t" style="left:1603.59px;top:1019.78px;font-size:10.3px;line-height:10.3px;color:#333;font-weight:400;">17:12</div>
<div class="t" style="left:1695.1599999999999px;top:1019.78px;font-size:10.3px;line-height:10.3px;color:#333;font-weight:400;">17:12:30</div>
<div class="t" style="left:1786.73px;top:1019.78px;font-size:10.3px;line-height:10.3px;color:#333;font-weight:400;">17:13</div>
<div class="t" style="left:-7px;top:813px;width:60px;height:14px;font-size:10.4px;line-height:14px;color:#444;transform:rotate(-90deg);text-align:center;white-space:nowrap">Latency (ms)</div>
<div class="t" style="left:1836px;top:820px;width:70px;height:14px;font-size:10.2px;line-height:14px;color:#d0202a;transform:rotate(90deg);text-align:center;white-space:nowrap">Packet Loss %</div>
<div style="position:absolute;left:959px;top:658px;width:151px;height:35px;background:rgba(0,0,0,0.25);filter:blur(1.5px)"></div>
<div style="position:absolute;left:956px;top:655px;width:151px;height:36px;box-sizing:border-box;border:1px solid #a8a8a8;background:#fff"></div>
<div class="t" style="left:962px;top:658.43px;font-size:11.3px;line-height:11.3px;color:#3c3c3c;font-weight:400;">Time: 23.10.2018 17:08:20.</div>
<div class="t" style="left:962px;top:671.93px;font-size:11.3px;line-height:11.3px;color:#3c3c3c;font-weight:400;">Latency: 120,43 ms.</div>
<div style="position:absolute;left:0px;top:1040px;width:1920px;height:40px;background:#0d0d0d;"></div>
<div style="position:absolute;left:197px;top:1040px;width:48px;height:40px;background:#383838;"></div>
<div style="position:absolute;left:103px;top:1078px;width:40px;height:2px;background:#76b9ed;"></div>
<div style="position:absolute;left:197px;top:1078px;width:48px;height:2px;background:#76b9ed;"></div>
<svg style="position:absolute;left:15px;top:1051px" width="18" height="18">
<path d="M0.5 2.7 L7.3 1.7 V8.3 H0.5 Z M8.3 1.5 L17 0.3 V8.3 H8.3 Z M0.5 9.3 H7.3 V16 L0.5 15 Z M8.3 9.3 H17 V17.4 L8.3 16.2 Z" fill="#fff"/></svg>
<svg style="position:absolute;left:63px;top:1051px" width="19" height="19"><circle cx="11.5" cy="7" r="5.2" fill="none" stroke="#fff" stroke-width="1.3"/><path d="M7.8 10.8 L1.5 17" stroke="#fff" stroke-width="1.4"/></svg>
<svg style="position:absolute;left:110px;top:1048px" width="25" height="24"><defs><linearGradient id="og" x1="0" y1="0" x2="1" y2="1"><stop offset="0" stop-color="#ff1f2f"/><stop offset="0.6" stop-color="#c8101e"/><stop offset="1" stop-color="#ff4a55"/></linearGradient></defs><ellipse cx="12.7" cy="11.8" rx="11.1" ry="11.3" fill="url(#og)"/><ellipse cx="12.7" cy="11.8" rx="5.2" ry="8.4" fill="#0d0d0d"/></svg>
<svg style="position:absolute;left:160px;top:1050px" width="24" height="21"><path d="M1.3 1 H8.5 L10 2.5 H22 V17.8 H1.3 Z" fill="#f3c544"/><rect x="2" y="1.6" width="5" height="1.2" fill="#7fd0f0"/><rect x="1.3" y="3" width="20.7" height="14.8" fill="#ffe38f"/><path d="M5.2 19 V10.8 H18.5 V19 H15 V14.7 H8.8 V19 Z" fill="#38b2ee"/></svg>
<svg style="position:absolute;left:209px;top:1048px" width="25" height="25"><defs><linearGradient id="pg" x1="0" y1="0" x2="0" y2="1"><stop offset="0" stop-color="#2aa8ea"/><stop offset="1" stop-color="#0e6db3"/></linearGradient></defs><rect x="0" y="0" width="24" height="24" rx="4" fill="url(#pg)"/>
<polygon points="0,4 9,4 8.3,6 0,6" fill="#f06a28"/><polygon points="0,6.3 8.1,6.3 7.4,8.3 0,8.3" fill="#f5d000"/><polygon points="0,8.6 7.2,8.6 6.5,10.6 0,10.6" fill="#8bc34a"/><polygon points="0,10.9 6.3,10.9 5.6,12.8 0,12.8" fill="#3aa35a"/>
<circle cx="16" cy="8.8" r="4.8" fill="#fff"/><path d="M4 24 L9.5 14.5 Q13 19.5 20 17 Q15 22 10.5 20.5 L8.5 24 Z" fill="#fff"/></svg>
<svg style="position:absolute;left:1698px;top:1054px" width="14" height="10"><path d="M1 8 L7 2 L13 8" fill="none" stroke="#fff" stroke-width="1.2"/></svg>
<svg style="position:absolute;left:1720px;top:1053px" width="19" height="16"><g fill="none" stroke="#fff" stroke-width="1"><rect x="3.5" y="1.5" width="13" height="10"/><path d="M10 11.5 V14 M6 14.5 H14 M2.5 3 V15"/><rect x="1.5" y="1.5" width="3" height="3"/></g></svg>
<svg style="position:absolute;left:1744px;top:1053px" width="19" height="16"><g fill="none" stroke="#fff" stroke-width="1"><path d="M1.5 5.5 H4.5 L8.5 1.5 V14.5 L4.5 10.5 H1.5 Z"/><path d="M11 5 Q12.5 8 11 11" /><path d="M13.5 3 Q16 8 13.5 13" stroke="#999"/></g></svg>
<div class="t" style="left:1773px;top:1055.02px;font-size:11.2px;line-height:11.2px;color:#fff;font-weight:400;letter-spacing:-0.739px;-webkit-text-stroke:0;">CES</div>
<div class="t" style="left:1333.480px;width:1000px;text-align:center;top:1045.52px;font-size:11.2px;line-height:11.2px;color:#fff;font-weight:400;letter-spacing:-0.040px;-webkit-text-stroke:0;">17:13</div>
<div class="t" style="left:1333.940px;width:1000px;text-align:center;top:1063.52px;font-size:11.2px;line-height:11.2px;color:#fff;font-weight:400;letter-spacing:-0.120px;-webkit-text-stroke:0;">23.10.2018</div>
<svg style="position:absolute;left:1878px;top:1051px" width="19" height="18"><path d="M1 1 H17 V13 H9 L5 17 V13 H1 Z" fill="#fff"/><path d="M4 4 H14 M4 7 H14 M4 10 H11" stroke="#0d0d0d" stroke-width="1"/></svg>
<div style="position:absolute;left:1915px;top:1040px;width:1px;height:40px;background:#555;"></div>
</body></html>
